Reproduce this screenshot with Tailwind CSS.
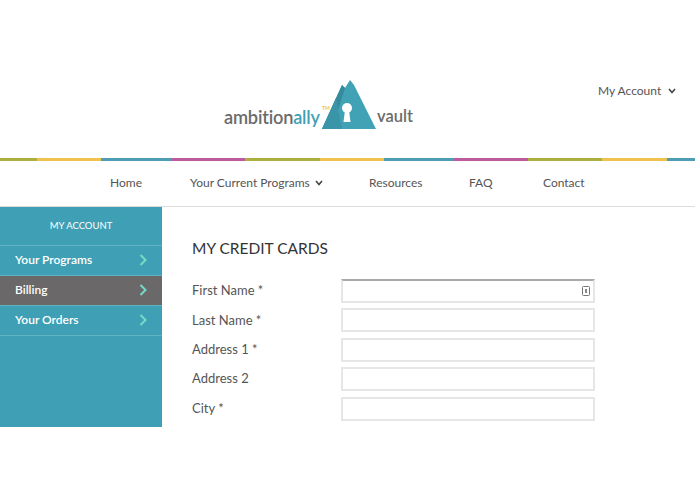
<!DOCTYPE html>
<html lang="en">
<head>
    <meta charset="UTF-8">
    <meta name="viewport" content="width=device-width, initial-scale=1.0">
    <title>My Credit Cards</title>
    <script src="https://cdn.jsdelivr.net/npm/@tailwindcss/browser@4"></script>
</head>
<body class="bg-white h-[494px] overflow-hidden font-['Lato','Liberation_Sans',sans-serif] text-[#555]">

    <!-- header -->
    <header class="h-[158px] flex items-start">
        <div class="relative ml-[224px] mt-[80px] flex items-end h-[49px] w-[190px] shrink-0">
            <span class="text-[18.2px] leading-[14px] font-semibold tracking-[-0.2px] text-[#6b6b6b] mb-[5.5px] w-[96px] whitespace-nowrap">ambition<span class="text-[#3f9fb4]">ally</span></span>
            <span class="absolute left-[98px] top-[26px] text-[5px] leading-[5px] font-bold text-[#f0c14f]">TM</span>
            <svg class="ml-[2px] w-[54px] h-[49px] shrink-0" viewBox="0 0 54 49">
                <path d="M0 49 L20 5 L23 8 L28 0 L32 5 L54 49 Z" fill="#41a2b6"/>
                <path d="M0 49 L20 5 L23 8 L10 49 Z" fill="#358a9c"/>
                <path d="M0 49 L14 18 L20 49 Z" fill="#3a95a9"/>
                <circle cx="25" cy="28" r="5" fill="#fff"/>
                <path d="M23 30 H27 L28.5 42 H21.5 Z" fill="#fff"/>
            </svg>
            <span class="ml-[1px] text-[16.5px] leading-[19px] font-semibold text-[#6b6b6b] mb-[3px]">vault</span>
        </div>
        <div class="ml-[-40px] pl-[224px] mt-[83px] flex items-center gap-[7px] text-[12px] leading-[15px] text-[#555] whitespace-nowrap">
            My Account
            <svg class="w-[8px] h-[6px] shrink-0" viewBox="0 0 8 6"><path d="M1 1 L4 4.5 L7 1" fill="none" stroke="#444" stroke-width="1.6"/></svg>
        </div>
    </header>

    <!-- stripe -->
    <div class="flex h-[3px]">
        <div class="w-[37px] bg-[#adb03f]"></div>
        <div class="w-[64px] bg-[#f0c14f]"></div>
        <div class="w-[71px] bg-[#4f9db4]"></div>
        <div class="w-[73px] bg-[#bb5a9d]"></div>
        <div class="w-[75px] bg-[#adb03f]"></div>
        <div class="w-[64px] bg-[#f0c14f]"></div>
        <div class="w-[70px] bg-[#4f9db4]"></div>
        <div class="w-[74px] bg-[#bb5a9d]"></div>
        <div class="w-[74px] bg-[#adb03f]"></div>
        <div class="w-[65px] bg-[#f0c14f]"></div>
        <div class="w-[28px] bg-[#4f9db4]"></div>
    </div>

    <!-- nav -->
    <nav class="h-[46px] pb-[2px] border-b border-[#dcdcdc] pl-[110px] flex items-center gap-[48px] text-[12px] text-[#555] whitespace-nowrap">
        <a class="w-[32px]">Home</a>
        <a class="w-[131px] flex items-center gap-[5px]">Your Current Programs
            <svg class="w-[8px] h-[6px] shrink-0" viewBox="0 0 8 6"><path d="M1 1 L4 4.5 L7 1" fill="none" stroke="#444" stroke-width="1.6"/></svg>
        </a>
        <a class="w-[52px]">Resources</a>
        <a class="w-[26px]">FAQ</a>
        <a>Contact</a>
    </nav>

    <!-- content -->
    <div class="flex h-[220px]">
        <aside class="w-[162px] bg-[#3f9fb4] text-white">
            <div class="h-[39px] flex items-center justify-center text-[9.5px] border-b border-[#5fb3c5]">MY ACCOUNT</div>
            <a class="h-[30px] px-[15px] pb-px flex items-center justify-between text-[12px] font-semibold border-b border-[#5fb3c5]">
                Your Programs
                <svg class="w-[8px] h-[12px]" viewBox="0 0 8 12"><path d="M1.5 1 L6.5 6 L1.5 11" fill="none" stroke="#74dcc6" stroke-width="2"/></svg>
            </a>
            <a class="h-[30px] px-[15px] pb-px flex items-center justify-between text-[12px] font-semibold bg-[#6a6868] border-b border-[#5fb3c5]">
                Billing
                <svg class="w-[8px] h-[12px]" viewBox="0 0 8 12"><path d="M1.5 1 L6.5 6 L1.5 11" fill="none" stroke="#74dcc6" stroke-width="2"/></svg>
            </a>
            <a class="h-[30px] px-[15px] pb-px flex items-center justify-between text-[12px] font-semibold border-b border-[#5fb3c5]">
                Your Orders
                <svg class="w-[8px] h-[12px]" viewBox="0 0 8 12"><path d="M1.5 1 L6.5 6 L1.5 11" fill="none" stroke="#74dcc6" stroke-width="2"/></svg>
            </a>
        </aside>

        <main class="pl-[30px] pt-[31px]">
            <h1 class="text-[15.5px] leading-[20px] text-[#333] mb-[21px]">MY CREDIT CARDS</h1>
            <form class="flex flex-col gap-[5.4px] text-[13px] text-[#555]">
                <div class="flex items-center h-[24px]">
                    <label class="w-[149px]">First Name *</label>
                    <div class="w-[254px] h-[24px] border-2 border-[#e6e6e6] border-t-[#aaa] flex items-center justify-end pr-[3px]">
                        <svg class="w-[8px] h-[10px]" viewBox="0 0 8 10"><rect x="0.5" y="0.5" width="7" height="9" rx="1" fill="none" stroke="#777"/><rect x="3" y="3" width="2" height="4" fill="#888"/></svg>
                    </div>
                </div>
                <div class="flex items-center h-[24px]">
                    <label class="w-[149px]">Last Name *</label>
                    <input class="w-[254px] h-[24px] border-2 border-[#e6e6e6] bg-white">
                </div>
                <div class="flex items-center h-[24px]">
                    <label class="w-[149px]">Address 1 *</label>
                    <input class="w-[254px] h-[24px] border-2 border-[#e6e6e6] bg-white">
                </div>
                <div class="flex items-center h-[24px]">
                    <label class="w-[149px]">Address 2</label>
                    <input class="w-[254px] h-[24px] border-2 border-[#e6e6e6] bg-white">
                </div>
                <div class="flex items-center h-[24px]">
                    <label class="w-[149px]">City *</label>
                    <input class="w-[254px] h-[24px] border-2 border-[#e6e6e6] bg-white">
                </div>
            </form>
        </main>
    </div>

</body>
</html>
